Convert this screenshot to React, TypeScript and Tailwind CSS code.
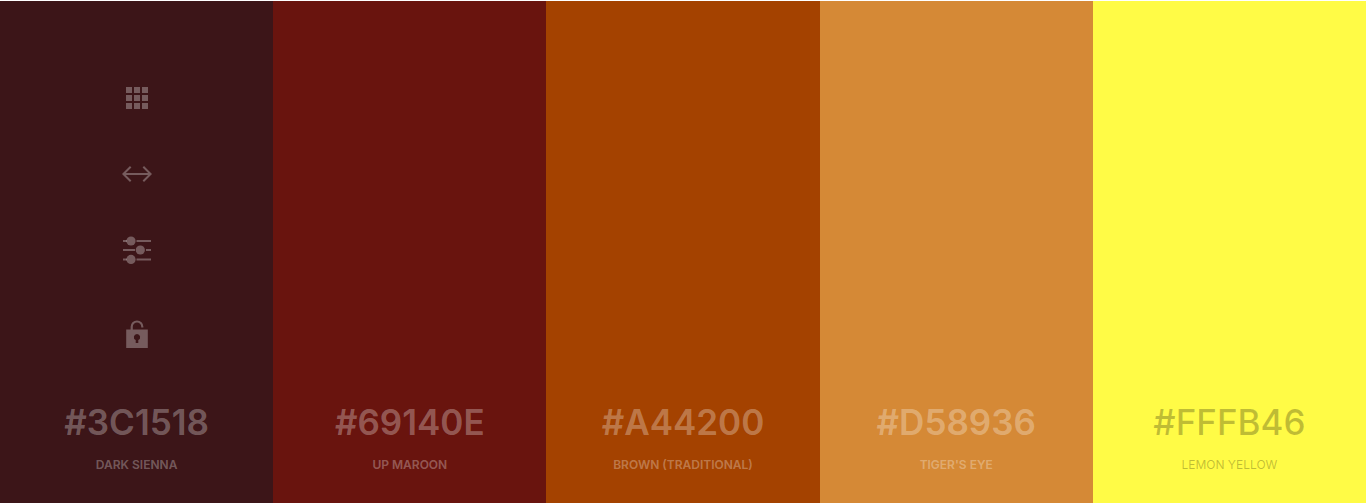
type Swatch = {
  hex: string;
  name: string;
  background: string;
  text: string;
  heading: string;
  label: string;
};

const swatches: Swatch[] = [
  { hex: '#3C1518', name: 'Dark Sienna', background: 'bg-[#3c1518]', text: 'text-white/30', heading: 'font-semibold', label: 'font-semibold' },
  { hex: '#69140E', name: 'UP Maroon', background: 'bg-[#69140e]', text: 'text-white/30', heading: 'font-semibold', label: 'font-semibold' },
  { hex: '#A44200', name: 'Brown (Traditional)', background: 'bg-[#a44200]', text: 'text-white/30', heading: 'font-semibold', label: 'font-semibold' },
  { hex: '#D58936', name: "Tiger's Eye", background: 'bg-[#d58936]', text: 'text-white/30', heading: 'font-semibold', label: 'font-semibold' },
  { hex: '#FFFB46', name: 'Lemon Yellow', background: 'bg-[#fffb46]', text: 'text-black/25', heading: 'font-medium', label: 'font-normal' },
];

function GridIcon() {
  return (
    <svg viewBox="0 0 30 30" className="size-[30px]" fill="currentColor" aria-hidden="true">
      {[4, 12, 20].map((y) =>
        [4, 12, 20].map((x) => <rect key={`${x}-${y}`} x={x} y={y} width="6" height="6" />),
      )}
    </svg>
  );
}

function DragIcon() {
  return (
    <svg viewBox="0 0 30 30" className="size-[30px]" fill="none" stroke="currentColor" strokeWidth="2" aria-hidden="true">
      <path d="M8.7 7.7 1.4 15l7.3 7.3M21.3 7.7l7.3 7.3-7.3 7.3M1.4 15h27.2" />
    </svg>
  );
}

function AdjustIcon() {
  return (
    <svg viewBox="0 0 30 30" className="size-[30px]" fill="currentColor" aria-hidden="true">
      <path d="M1 5h4v2H1zM14.5 5H29v2H14.5zM1 14h12v2H1zM24 14h5v2h-5zM1 23.4h4v2H1zM14.5 23.4H29v2H14.5z" />
      <circle cx="9" cy="6" r="4.6" />
      <circle cx="18.3" cy="15" r="4.6" />
      <circle cx="9" cy="24.4" r="4.6" />
    </svg>
  );
}

function UnlockIcon() {
  return (
    <svg viewBox="0 0 30 30" className="size-[30px]" aria-hidden="true">
      <path
        fill="currentColor"
        fillRule="evenodd"
        d="M4.2 10.5H8.6V7.8a6.4 6.4 0 0 1 12.8 0v.8h-2.2v-.8a4.2 4.2 0 0 0-8.4 0v2.7h15V29H4.2zM15 15a3.2 3.2 0 0 0-1.3 6.1V24h2.6v-2.9A3.2 3.2 0 0 0 15 15z"
      />
    </svg>
  );
}

function Tools() {
  return (
    <div className="flex flex-col items-center gap-[46px] pb-[53px] text-white/30">
      <button type="button" aria-label="Alternative shades"><GridIcon /></button>
      <button type="button" aria-label="Drag"><DragIcon /></button>
      <button type="button" aria-label="Adjust"><AdjustIcon /></button>
      <button type="button" aria-label="Lock" className="pt-2"><UnlockIcon /></button>
    </div>
  );
}

export default function App() {
  return (
    <main className="flex min-h-screen border-t border-white bg-white font-['Inter',sans-serif]">
      {swatches.map((swatch, index) => (
        <section
          key={swatch.hex}
          className={`flex flex-1 flex-col items-center justify-end pb-7 ${swatch.background} ${swatch.text}`}
        >
          {index === 0 && <Tools />}
          <h2 className={`text-[35px] leading-10 ${swatch.heading}`}>{swatch.hex}</h2>
          <p className={`mt-[13px] text-xs leading-5 uppercase ${swatch.label}`}>{swatch.name}</p>
        </section>
      ))}
    </main>
  );
}
